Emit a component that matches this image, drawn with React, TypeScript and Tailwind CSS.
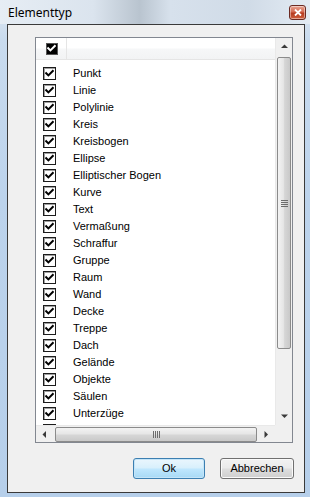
import React from 'react';

const items = [
  'Punkt',
  'Linie',
  'Polylinie',
  'Kreis',
  'Kreisbogen',
  'Ellipse',
  'Elliptischer Bogen',
  'Kurve',
  'Text',
  'Vermaßung',
  'Schraffur',
  'Gruppe',
  'Raum',
  'Wand',
  'Decke',
  'Treppe',
  'Dach',
  'Gelände',
  'Objekte',
  'Säulen',
  'Unterzüge',
];

function Check({ inverted = false }: { inverted?: boolean }) {
  return (
    <svg width="9" height="9" viewBox="0 0 9 9" className="block">
      <path d="M1.2 4.2 L3.4 6.4 L7.8 2" stroke={inverted ? '#ffffff' : '#000000'} strokeWidth="2" fill="none" strokeLinecap="square" />
    </svg>
  );
}

function RowBox() {
  return (
    <span className="flex items-center justify-center w-[13px] h-[13px] border border-[#1c1c1c] bg-white shadow-[inset_1px_1px_0_#a0a0a0]">
      <Check />
    </span>
  );
}

function Arrow({ dir }: { dir: 'up' | 'down' | 'left' | 'right' }) {
  const d = {
    up: 'M0 4 L3.5 0.5 L7 4 Z',
    down: 'M0 0.5 L7 0.5 L3.5 4 Z',
    left: 'M4 0 L0.5 3.5 L4 7 Z',
    right: 'M0.5 0 L4 3.5 L0.5 7 Z',
  }[dir];
  const vertical = dir === 'up' || dir === 'down';
  return (
    <svg width={vertical ? 7 : 5} height={vertical ? 5 : 7} viewBox={vertical ? '0 0 7 5' : '0 0 5 7'}>
      <path d={d} fill="#3a3a3a" />
    </svg>
  );
}

export default function App() {
  return (
    <div
      className="w-[310px] h-[497px] flex flex-col bg-[linear-gradient(180deg,#dfe8f1_0%,#c9dbee_8%,#bcd3ec_40%,#b6cfea_100%)] overflow-hidden"
      style={{ fontFamily: '"Liberation Sans", Arial, sans-serif' }}
    >
      {/* Title bar */}
      <div className="h-[24px] flex items-start justify-between pl-[8px] pr-[4px] bg-[linear-gradient(90deg,#e6edf4_0%,#dbe4ee_30%,#b9c4cf_45%,#d7e1ec_55%,#d0dbe7_80%,#e3ebf3_100%)]">
        <span className="mt-[4px] text-[12px] text-black" style={{ fontFamily: '"Noto Sans", "Liberation Sans", sans-serif' }}>
          Elementtyp
        </span>
        <span className="mt-[5px] w-[17px] h-[15px] rounded-[3px] border border-[#6b2a22] bg-[linear-gradient(180deg,#e8a493_0%,#d46a52_45%,#b53a1f_55%,#cf5f3e_100%)] flex items-center justify-center shadow-[inset_0_0_0_1px_rgba(255,255,255,0.45)]">
          <svg width="8" height="7" viewBox="0 0 8 7">
            <path d="M1 0.5 L4 3.5 L7 0.5 M1 6.5 L4 3.5 L7 6.5" stroke="#ffffff" strokeWidth="1.8" fill="none" />
          </svg>
        </span>
      </div>

      {/* Client area */}
      <div className="ml-[7px] mr-[5px] h-[469px] border border-[#3a3a3a] bg-[#f0f0f0] flex flex-col">
        <div className="pl-[27px] pt-[12px]">
          {/* List view */}
          <div className="w-[258px] h-[406px] border border-[#828790] bg-white flex flex-col">
            <div className="flex h-[387px]">
              <div className="w-[239px] overflow-hidden flex flex-col">
                {/* Header */}
                <div className="h-[22px] shrink-0 flex items-stretch border-b border-[#e5e5e5] bg-[linear-gradient(180deg,#ffffff_0%,#ffffff_45%,#f6f7f8_55%,#f2f3f4_100%)]">
                  <div className="w-[31px] flex items-center justify-center pl-[1px] border-r border-[#e5e5e5]">
                    <span className="flex items-center justify-center w-[12px] h-[12px] bg-black border border-[#555]">
                      <Check inverted />
                    </span>
                  </div>
                  <div className="flex-1" />
                </div>
                {/* Rows */}
                <div className="pt-[5px] flex flex-col">
                  {items.map((name) => (
                    <div key={name} className="h-[17px] shrink-0 flex items-center">
                      <span className="ml-[7px]">
                        <RowBox />
                      </span>
                      <span className="ml-[17px] text-[11px] text-black leading-none">{name}</span>
                    </div>
                  ))}
                  <div className="h-[17px] shrink-0 flex items-center">
                    <span className="ml-[7px]">
                      <RowBox />
                    </span>
                  </div>
                </div>
              </div>
              {/* Vertical scrollbar */}
              <div className="w-[17px] flex flex-col bg-[#f0f0f0] border-l border-[#e9e9e9]">
                <div className="h-[17px] flex items-center justify-center">
                  <Arrow dir="up" />
                </div>
                <div className="mt-[2px] h-[292px] mx-[1px] rounded-[2px] border border-[#8b8b8b] bg-[linear-gradient(90deg,#f3f3f3_0%,#e6e6e6_45%,#d6d6d6_55%,#c9c9c9_100%)] flex items-center justify-center">
                  <div className="flex flex-col gap-[1px]">
                    <div className="w-[7px] h-[1px] bg-[#6c6c6c]" />
                    <div className="w-[7px] h-[1px] bg-[#6c6c6c]" />
                    <div className="w-[7px] h-[1px] bg-[#6c6c6c]" />
                    <div className="w-[7px] h-[1px] bg-[#6c6c6c]" />
                  </div>
                </div>
                <div className="flex-1" />
                <div className="h-[17px] flex items-center justify-center">
                  <Arrow dir="down" />
                </div>
              </div>
            </div>
            {/* Horizontal scrollbar */}
            <div className="h-[17px] flex">
              <div className="w-[239px] flex items-center bg-[#f0f0f0] border-t border-[#e9e9e9]">
                <div className="w-[17px] h-full flex items-center justify-center">
                  <Arrow dir="left" />
                </div>
                <div className="ml-[2px] w-[202px] h-[15px] rounded-[2px] border border-[#8b8b8b] bg-[linear-gradient(180deg,#f3f3f3_0%,#e6e6e6_45%,#d6d6d6_55%,#c9c9c9_100%)] flex items-center justify-center">
                  <div className="flex gap-[1px]">
                    <div className="w-[1px] h-[7px] bg-[#6c6c6c]" />
                    <div className="w-[1px] h-[7px] bg-[#6c6c6c]" />
                    <div className="w-[1px] h-[7px] bg-[#6c6c6c]" />
                    <div className="w-[1px] h-[7px] bg-[#6c6c6c]" />
                  </div>
                </div>
                <div className="flex-1" />
                <div className="w-[17px] h-full flex items-center justify-center">
                  <Arrow dir="right" />
                </div>
              </div>
              <div className="w-[17px] bg-[#f0f0f0]" />
            </div>
          </div>
        </div>

        {/* Buttons */}
        <div className="mt-[15px] pl-[125px] flex gap-[15px]">
          <button className="w-[72px] h-[21px] rounded-[3px] border border-[#3c7fb1] bg-[linear-gradient(180deg,#eaf6fd_0%,#d9f0fc_45%,#bee6fd_55%,#a7d9f5_100%)] shadow-[inset_0_0_0_1px_#c5e5f8] text-[11px] text-black">
            Ok
          </button>
          <button className="w-[74px] h-[21px] rounded-[3px] border border-[#707070] bg-[linear-gradient(180deg,#f2f2f2_0%,#ebebeb_45%,#dddddd_55%,#cfcfcf_100%)] shadow-[inset_0_0_0_1px_#fafafa] text-[11px] text-black">
            Abbrechen
          </button>
        </div>
      </div>
    </div>
  );
}
